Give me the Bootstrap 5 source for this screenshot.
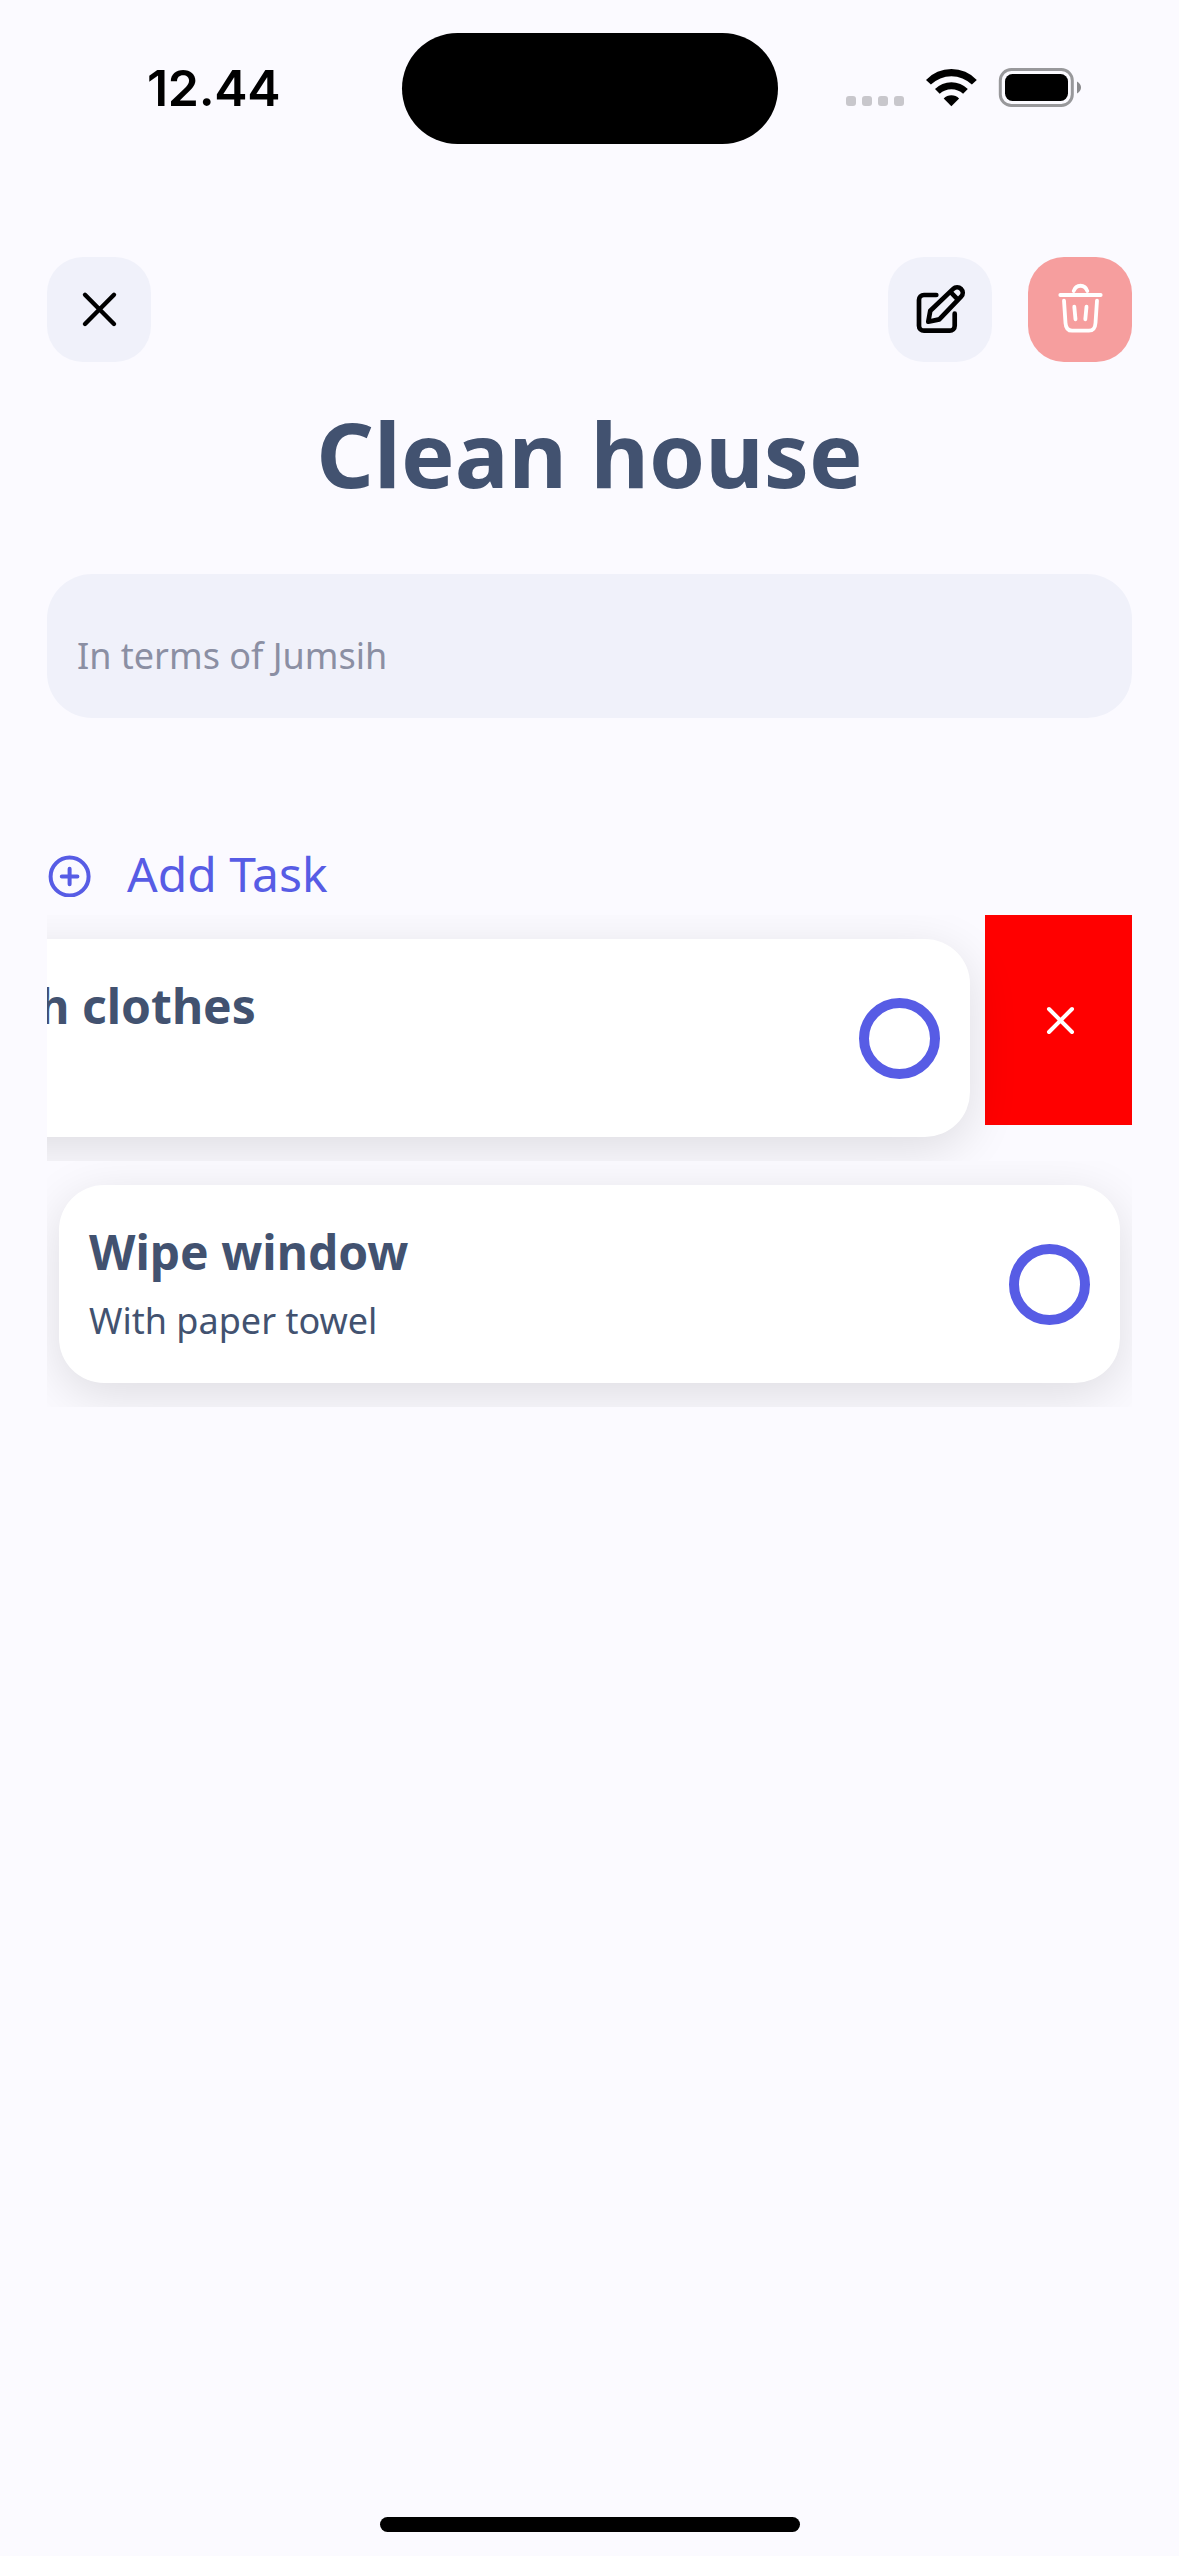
<!DOCTYPE html>
<html lang="en">
<head>
<meta charset="utf-8">
<meta name="viewport" content="width=device-width, initial-scale=1">
<title>Clean house</title>
<link href="https://cdn.jsdelivr.net/npm/bootstrap@5.3.0/dist/css/bootstrap.min.css" rel="stylesheet">
<style>
  body { background: #fbfaff; color: #425270; font-family: "Noto Sans", sans-serif; }
  .screen { width: 1179px; height: 2556px; }
  .status-bar { height: 177px; padding: 33px 0 0 147px; }
  .clock { width: 255px; font: 600 50px/111px Inter, sans-serif; color: #000; letter-spacing: -.3px; }
  .island { width: 376px; height: 111px; border-radius: 56px; background: #000; }
  .signal { gap: 6px; margin: 63px 20px 0 68px; }
  .signal i { width: 10px; height: 10px; border-radius: 3px; background: #c8c7cc; }
  .content { padding: 80px 47px 0; }
  .tool-btn { width: 104px; height: 105px; border-radius: 36px; background: #f0f1fa; }
  .tool-btn.danger { background: #f69e9e; margin-left: 36px; }
  .page-title { font-size: 90px; line-height: 122px; margin: 30px 0 60px; }
  .note { height: 144px; border-radius: 45px; background: #f0f1fa; padding: 57px 30px 0; font-size: 36px; line-height: 50px; color: #8b8fa3; }
  .add-task { color: #575ce5; font-size: 48px; line-height: 66px; margin: 123px 0 8px; gap: 34px; }
  .task-row { height: 246px; padding: 24px 12px; }
  .task { width: 1061px; height: 198px; border-radius: 45px; padding: 0 30px; background: #fff; box-shadow: 0 12px 50px rgba(0,0,0,.12); z-index: 1; }
  .task-row.swiped { padding-right: 0; }
  .swiped .task { margin-left: -150px; padding-left: 31px; }
  .task-name { font-size: 48px; line-height: 66px; margin: 34px 0 11px; }
  .task-note { font-size: 36px; line-height: 50px; }
  .check-ring { width: 81px; height: 81px; border: 10px solid #575ce5; }
  .swipe-delete { width: 147px; height: 210px; margin: -24px 0 0 15px; background: #f00; }
  .home-bar { width: 420px; height: 15px; border-radius: 8px; background: #000; margin-bottom: 24px; }
  svg { display: block; fill: none; stroke-linecap: round; stroke-linejoin: round; }
</style>
</head>
<body>
<div class="screen d-flex flex-column overflow-hidden">
  <div class="status-bar d-flex align-items-start">
    <div class="clock flex-shrink-0">12.44</div>
    <div class="island flex-shrink-0"></div>
    <div class="signal d-flex"><i></i><i></i><i></i><i></i></div>
    <svg class="mt-4 flex-shrink-0" width="160" height="60" viewBox="0 0 160 60">
      <g fill="#000" transform="translate(2 12)">
        <path d="M0 11A34.8 34.8 0 0 1 50.8 11L45.9 15.6A29.5 29.5 0 0 0 4.9 15.6Z"/>
        <path d="M9 20A23 23 0 0 1 41.8 20L37.1 24.8A17 17 0 0 0 13.7 24.8Z"/>
        <path d="M17.7 29.4A11 11 0 0 1 33.1 29.4L25.4 37.2Z"/>
      </g>
      <rect x="76.3" y="12.5" width="72" height="36" rx="11" stroke="#98989b" stroke-width="3"/>
      <rect x="81" y="17" width="63" height="27" rx="7.5" fill="#000"/>
      <path d="M153 24.5Q157 27 157 30.5T153 36.5Z" fill="#8a8a8d"/>
    </svg>
  </div>

  <main class="content flex-grow-1">
    <div class="d-flex">
      <button class="tool-btn border-0 p-0 me-auto" aria-label="Close">
        <svg width="104" height="105" stroke="#000" stroke-width="4.4"><path d="M38 37.8L67 67M67 37.8L38 67"/></svg>
      </button>
      <button class="tool-btn border-0 p-0" aria-label="Edit">
        <svg width="104" height="105" stroke="#000" stroke-width="4.7"><path d="M48.3 38H36a5 5 0 0 0-5 5V68.7a5 5 0 0 0 5 5H61.7a5 5 0 0 0 5-5V56.7M40.3 64.7L42.3 53.7L65.2 31.9A5.4 5.4 0 0 1 73.1 39.7L51.3 62.4ZM63 35.5L69.4 42.2"/></svg>
      </button>
      <button class="tool-btn danger border-0 p-0" aria-label="Delete">
        <svg width="104" height="105" stroke="#fff" stroke-width="3.8"><path d="M32.3 38H72.7M45.7 34C48 27 57 27 59.3 34M36 43.7L37.5 66Q38 73.7 44 73.7H61Q67 73.7 67.5 66L69 43.7M46.3 49.7L47.5 62.3M58.5 49.7L57.3 62.3"/></svg>
      </button>
    </div>

    <h1 class="page-title fw-bold text-center">Clean house</h1>
    <div class="note">In terms of Jumsih</div>

    <div class="add-task d-flex align-items-center">
      <svg width="46" height="46" stroke="currentColor" stroke-width="4"><circle cx="22.6" cy="25.5" r="19"/><path d="M14.8 25.5H30.4M22.6 17.7V33.3"/></svg>
      <span>Add Task</span>
    </div>

    <div class="task-row swiped d-flex overflow-hidden">
      <div class="task position-relative d-flex align-items-center justify-content-between flex-shrink-0">
        <div class="align-self-start"><h2 class="task-name fw-bold">Wash clothes</h2></div>
        <div class="check-ring rounded-circle"></div>
      </div>
      <div class="swipe-delete flex-shrink-0">
        <svg width="147" height="210" stroke="#fff" stroke-width="4"><path d="M64 94L87 117M87 94L64 117"/></svg>
      </div>
    </div>

    <div class="task-row d-flex overflow-hidden">
      <div class="task position-relative d-flex align-items-center justify-content-between flex-shrink-0">
        <div class="align-self-start">
          <h2 class="task-name fw-bold">Wipe window</h2>
          <div class="task-note">With paper towel</div>
        </div>
        <div class="check-ring rounded-circle"></div>
      </div>
    </div>
  </main>

  <div class="home-bar mx-auto"></div>
</div>
<script src="https://cdn.jsdelivr.net/npm/bootstrap@5.3.0/dist/js/bootstrap.bundle.min.js"></script>
</body>
</html>
